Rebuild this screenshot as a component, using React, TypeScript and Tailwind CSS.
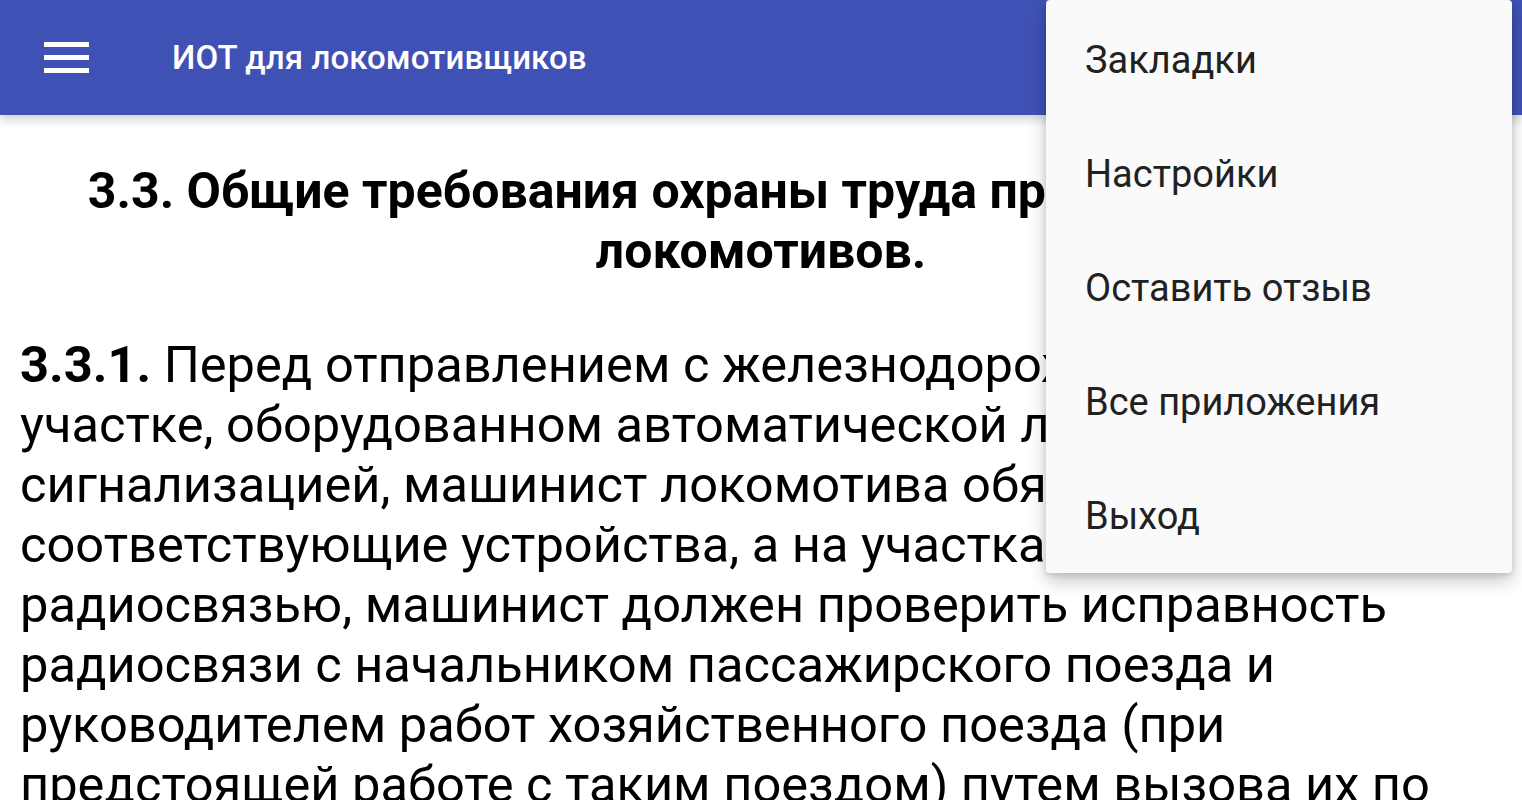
import React from "react";

const bodyLines: React.ReactNode[] = [
  <>
    <span className="font-bold">3.3.1.</span> Перед отправлением с железнодорожной станции на
  </>,
  "участке, оборудованном автоматической локомотивной",
  "сигнализацией, машинист локомотива обязан проверить",
  "соответствующие устройства, а на участках, оборудованных",
  "радиосвязью, машинист должен проверить исправность",
  "радиосвязи с начальником пассажирского поезда и",
  "руководителем работ хозяйственного поезда (при",
  "предстоящей работе с таким поездом) путем вызова их по",
];

const menuItems = ["Закладки", "Настройки", "Оставить отзыв", "Все приложения", "Выход"];

export default function App() {
  return (
    <div className="relative w-[1522px] h-[800px] overflow-hidden bg-white font-['Roboto',sans-serif]">
      <header className="relative z-10 h-[115px] bg-[#3F51B5] flex items-center shadow-[0_4px_10px_rgba(0,0,0,0.2)]">
        <div className="ml-[44px] w-[45px] flex flex-col gap-[8px]">
          <span className="block h-[5px] bg-white" />
          <span className="block h-[5px] bg-white" />
          <span className="block h-[5px] bg-white" />
        </div>
        <h1 className="ml-[83px] text-white text-[33px] font-medium leading-none tracking-[0.1px]">
          ИОТ для локомотивщиков
        </h1>
      </header>

      <main className="text-black">
        <h2 className="mt-[46px] text-center font-bold text-[50px] leading-[60px]">
          <span className="block whitespace-nowrap">3.3. Общие требования охраны труда при обслуживании</span>
          <span className="block whitespace-nowrap">локомотивов.</span>
        </h2>
        <div className="mt-[54px] px-[20px] text-[50.6px] leading-[60px]">
          {bodyLines.map((l, i) => (
            <p key={i} className="whitespace-nowrap">
              {l}
            </p>
          ))}
        </div>
      </main>

      <nav className="absolute z-20 top-0 left-[1046px] w-[466px] pt-[3px] bg-[#FAFAFA] rounded-[4px] shadow-[0_8px_18px_rgba(0,0,0,0.22),0_2px_6px_rgba(0,0,0,0.12)]">
        {menuItems.map((m) => (
          <div key={m} className="h-[114px] flex items-center pl-[39px] text-[38px] text-[#212121] leading-none">
            {m}
          </div>
        ))}
      </nav>
    </div>
  );
}
